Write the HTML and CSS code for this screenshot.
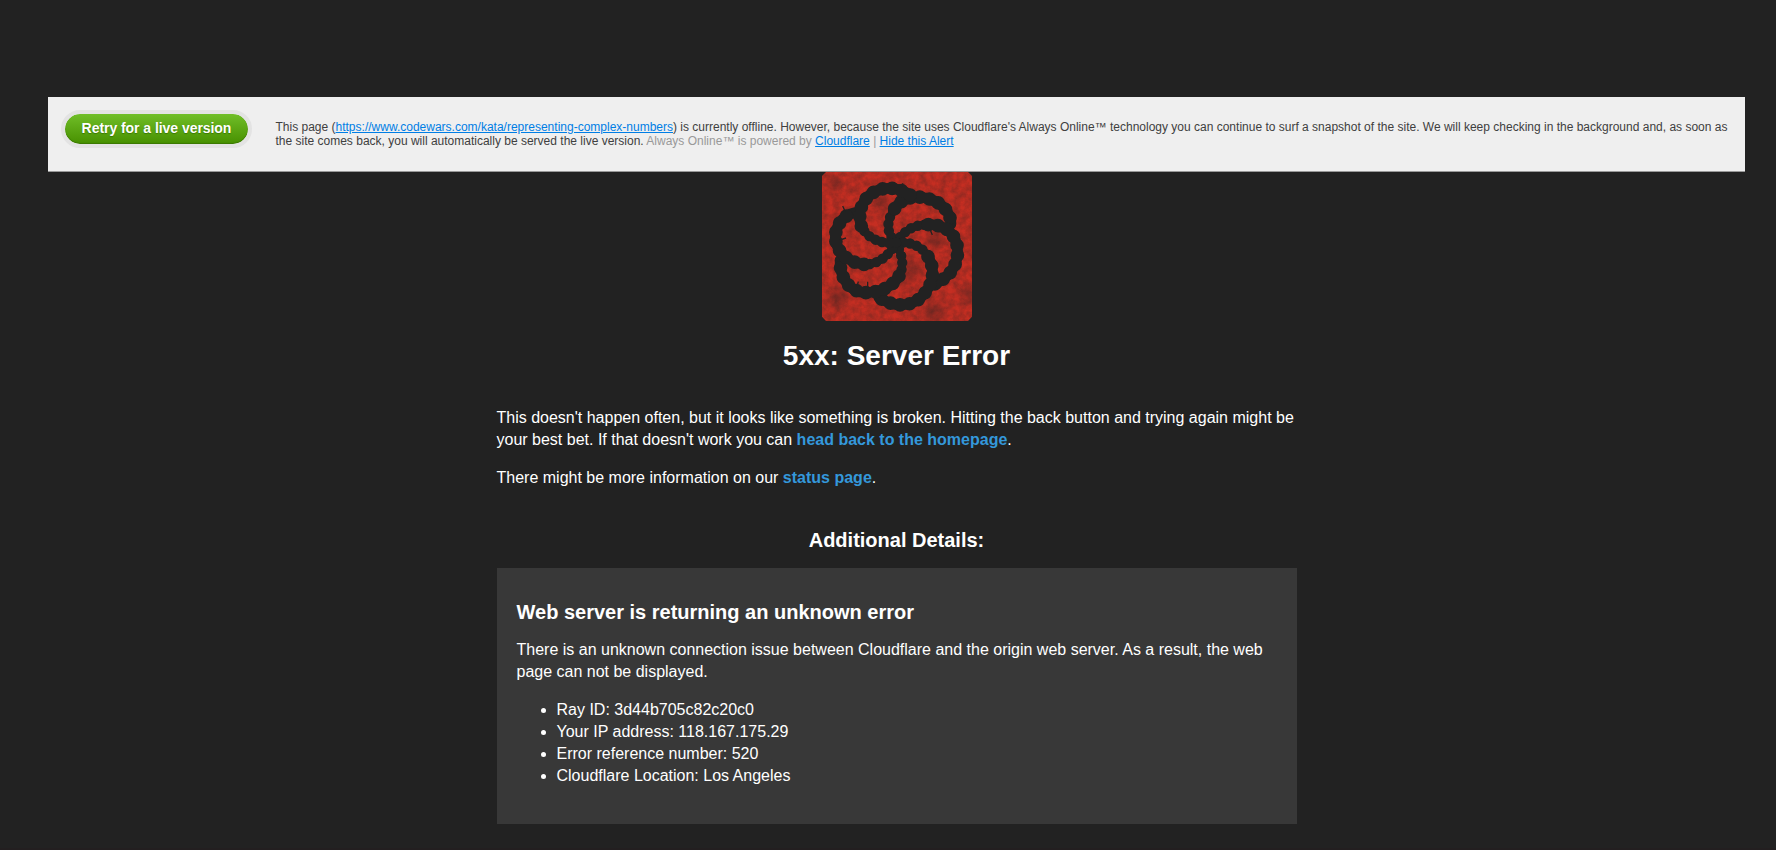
FILE: index.html
```html
<!DOCTYPE html>
<html lang="en">
<head>
<meta charset="utf-8">
<title>5xx: Server Error</title>
<link rel="stylesheet" href="styles.css">
</head>
<body>
<div class="alert">
  <a class="retry" href="#">Retry for a live version</a>
  <p class="alert-text">This page (<a href="#">https://www.codewars.com/kata/representing-complex-numbers</a>) is currently offline. However, because the site uses Cloudflare's Always Online™ technology you can continue to surf a snapshot of the site. We will keep checking in the background and, as soon as the site comes back, you will automatically be served the live version. <span class="powered">Always Online™ is powered by <a href="#">Cloudflare</a> | <a href="#">Hide this Alert</a></span></p>
</div>
<main class="content">
  <svg class="logo" viewBox="66 36 450 447" preserveAspectRatio="none" role="img" aria-label="Codewars">
    <defs>
      <clipPath id="tile"><path d="M78 36H504L516 48V470L504 483H78L66 470V48Z"/></clipPath>
      <filter id="cloud" x="0" y="0" width="100%" height="100%" color-interpolation-filters="sRGB">
        <feTurbulence type="fractalNoise" baseFrequency=".05" numOctaves="4" seed="8"/>
        <feColorMatrix values="0 0 0 0 .13  0 0 0 0 .13  0 0 0 0 .13  1.4 0 0 0 -.4"/>
      </filter>
      <radialGradient id="spot"><stop offset="0" stop-color="#222" stop-opacity=".35"/><stop offset="1" stop-color="#222" stop-opacity="0"/></radialGradient>
      <g id="inner">
        <path d="M288 248C258 220 258 182 284 146"/>
        <path d="M288 248C312 212 340 193 385 194"/>
        <path d="M288 248C330 244 368 258 384 290"/>
        <path d="M288 248C304 280 316 314 297 348"/>
        <path d="M288 248C266 290 230 315 192 313"/>
        <path d="M288 248C244 254 200 234 184 198"/>
      </g>
      <g id="outer">
        <path d="M284 146C304 114 345 104 385 116C428 128 452 158 453 192"/>
        <path d="M385 194C438 192 473 225 473 276C471 324 445 354 400 374"/>
        <path d="M384 290C412 338 394 382 362 413C330 442 280 442 236 412"/>
        <path d="M297 348C278 380 240 398 196 398C145 396 119 348 120 300"/>
        <path d="M192 313C142 308 108 274 106 232C106 198 128 166 164 158"/>
        <path d="M184 198C170 156 188 114 226 94C262 77 302 84 338 110"/>
      </g>
    </defs>
    <g clip-path="url(#tile)">
      <rect class="tile" x="66" y="36" width="450" height="447"/>
      <circle cx="105" cy="72" r="32" fill="url(#spot)"/>
      <circle cx="112" cy="415" r="48" fill="url(#spot)"/>
      <circle cx="505" cy="400" r="38" fill="url(#spot)"/>
      <circle cx="405" cy="238" r="38" fill="url(#spot)"/>
      <circle cx="330" cy="330" r="48" fill="url(#spot)"/>
      <circle cx="245" cy="125" r="38" fill="url(#spot)"/>
      <circle cx="400" cy="455" r="50" fill="url(#spot)"/>
      <rect x="66" y="36" width="450" height="447" filter="url(#cloud)" opacity=".4"/>
      <use href="#inner" class="rope thin"/>
      <use href="#inner" class="rope thin beads"/>
      <use href="#outer" class="rope thick"/>
      <use href="#outer" class="rope thick beads"/>
      <path class="burr" d="M136 155L128 138M304 82L309 70M170 382L175 365M203 382V365M390 208L397 225M120 240L138 234"/>
    </g>
  </svg>
  <h1>5xx: Server Error</h1>
  <p>This doesn't happen often, but it looks like something is broken. Hitting the back button and trying again might be your best bet. If that doesn't work you can <a href="#">head back to the homepage</a>.</p>
  <p>There might be more information on our <a href="#">status page</a>.</p>
  <h3 class="details-title">Additional Details:</h3>
  <section class="details">
    <h3>Web server is returning an unknown error</h3>
    <p>There is an unknown connection issue between Cloudflare and the origin web server. As a result, the web page can not be displayed.</p>
    <ul>
      <li>Ray ID: 3d44b705c82c20c0</li>
      <li>Your IP address: 118.167.175.29</li>
      <li>Error reference number: 520</li>
      <li>Cloudflare Location: Los Angeles</li>
    </ul>
  </section>
</main>
</body>
</html>
```
FILE: styles.css
```css
* { box-sizing: border-box; }
body {
  margin: 0;
  padding: 97px 0 0 18px;
  height: 850px;
  overflow: hidden;
  background: #222;
  border-bottom: 2px solid #231f20;
  color: #fff;
  font: 16px/22px "Liberation Sans", Arial, sans-serif;
}
.alert {
  display: flex;
  align-items: flex-start;
  width: 1697px;
  height: 75px;
  margin-left: 30px;
  padding: 13px 14px 0 13px;
  background: #efefef;
  border-bottom: 1px solid #999;
  color: #404040;
}
.retry {
  flex: none;
  width: 191px;
  height: 38px;
  border: 4px solid #e3e3e3;
  border-radius: 19px;
  background: linear-gradient(#70be28, #479000) padding-box;
  box-shadow: inset 0 -1px 1px #3a7800;
  color: #fff;
  font-size: 14px;
  font-weight: bold;
  letter-spacing: -0.05px;
  line-height: 28px;
  text-align: center;
  text-decoration: none;
  text-shadow: 0 1px 1px #3a7800;
}
.alert-text {
  margin: 10px 0 0 23.5px;
  font-size: 12px;
  line-height: 14px;
}
.alert-text a { color: #007ee5; }
.powered { color: #999; }
.content { width: 800px; margin: 0 auto 0 478.5px; }
.logo { display: block; width: 150px; height: 149px; margin: 0 auto; }
.tile { fill: #c52e22; }
.rope { fill: none; stroke: #222; stroke-linecap: round; }
.thin { stroke-width: 23; }
.thin.beads { stroke-width: 31; stroke-dasharray: 0 21; }
.thick { stroke-width: 32; }
.thick.beads { stroke-width: 41; stroke-dasharray: 0 29; }
.burr { fill: none; stroke: #222; stroke-width: 4; }
h1 { margin: 15px 0 31px; font-size: 28px; line-height: 40px; text-align: center; }
p { margin: 0 0 16px; }
.content a { color: #3498db; font-weight: bold; text-decoration: none; }
h3 { margin: 0 0 13px; font-size: 20px; line-height: 28px; }
.details-title { margin-top: 37px; margin-bottom: 14px; text-align: center; }
.details { height: 256px; padding: 30px 20px; background: #383838; }
ul { margin: 0; padding-left: 40px; }
```
